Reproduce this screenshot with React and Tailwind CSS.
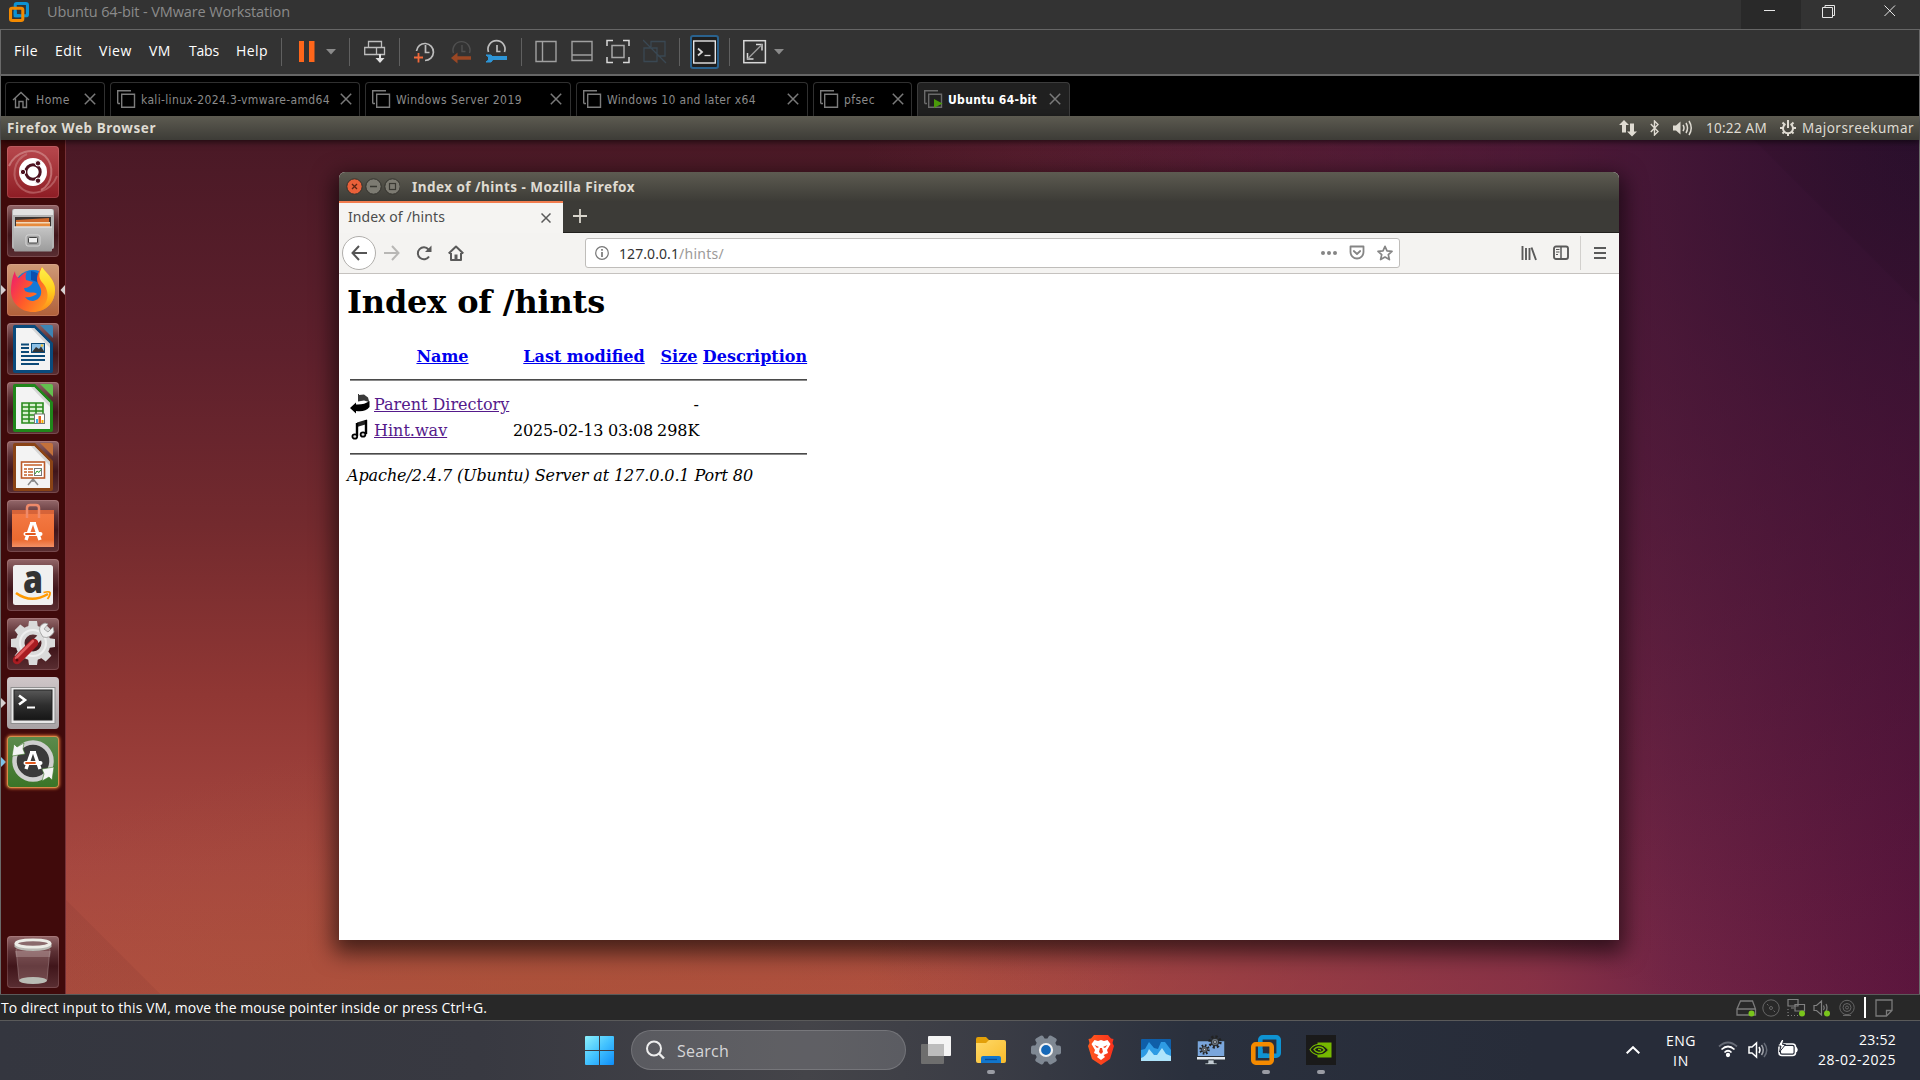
import { useLayoutEffect, useRef, useState } from "react";

/* Text set to an exact run length by spreading its letters. */
function Fit({ w, className = "", children }) {
  const ref = useRef(null);
  const [ls, setLs] = useState(0);
  useLayoutEffect(() => {
    const el = ref.current;
    el.style.letterSpacing = "0px";
    const natural = el.getBoundingClientRect().width;
    const v = (w - natural) / el.textContent.length;
    el.style.letterSpacing = v + "px";
    setLs(v);
  }, [w]);
  return (
    <span ref={ref} className={"inline-block shrink-0 whitespace-pre " + className} style={{ letterSpacing: ls + "px" }}>
      {children}
    </span>
  );
}

function Svg({ w, h, className = "", children, ...rest }) {
  return (
    <svg width={w} height={h} viewBox={`0 0 ${w} ${h}`} fill="none" className={"block shrink-0 " + className} {...rest}>
      {children}
    </svg>
  );
}

function VmwareLogo({ size, className = "" }) {
  return (
    <svg width={size} height={size} viewBox="0 0 30 30" fill="none" className={"block shrink-0 " + className}>
      <rect x="9.3" y="2.3" width="18.4" height="18.4" rx="2.5" stroke="#0e93d3" strokeWidth="4.6" />
      <rect x="2.3" y="9.3" width="18.4" height="18.4" rx="2.5" stroke="#f48a00" strokeWidth="4.6" />
      <path d="M9.3 14V20.7H16" stroke="#0e93d3" strokeWidth="4.6" />
    </svg>
  );
}

function TitleBar() {
  return (
    <div className="flex h-[29px] shrink-0 bg-[#333333]">
      <VmwareLogo size={20} className="ml-[9px] mt-[2px]" />
      <Fit w={243} className="ml-[18px] mt-[1px] font-['Open_Sans',sans-serif] text-[14.5px] leading-[22px] text-[#8b8b8b]">
        Ubuntu 64-bit - VMware Workstation
      </Fit>
      <div className="ml-auto flex">
        <div className="h-[29px] w-[60px] bg-[#292929]">
          <Svg w={60} h={29}><path d="M23 10.5H34" stroke="#e6e6e6" /></Svg>
        </div>
        <Svg w={60} h={29}>
          <path d="M21.5 7.5H31.5V17.500H21.500ZM24 7V5.500H33.500V15.500H32" stroke="#e6e6e6" />
        </Svg>
        <Svg w={59} h={29}><path d="M23.500 5.500L34 16M34 5.500L23.500 16" stroke="#e6e6e6" /></Svg>
      </div>
    </div>
  );
}

const Sep = ({ className }) => <div className={"h-[28px] w-px shrink-0 bg-[#606060] " + className} />;

function ToolBar() {
  const menu = "font-['Open_Sans',sans-serif] text-[14px] leading-[20px] text-white -mt-[2px]";
  return (
    <div className="flex h-[44px] shrink-0 items-center border-x border-[#6a6a6a] bg-[#333333]">
      <Fit w={24} className={"ml-[13px] " + menu}>File</Fit>
      <Fit w={27} className={"ml-[17px] " + menu}>Edit</Fit>
      <Fit w={33} className={"ml-[17px] " + menu}>View</Fit>
      <Fit w={22} className={"ml-[17px] " + menu}>VM</Fit>
      <Fit w={30} className={"ml-[18px] " + menu}>Tabs</Fit>
      <Fit w={32} className={"ml-[17px] " + menu}>Help</Fit>
      <Sep className="ml-[13px]" />
      <Svg w={38} h={44} className="ml-[17px]">
        <path d="M0 11H5V32H0ZM10 11H15.500V32H10Z" fill="#ff661a" />
        <path d="M27 19H37L32 24.500Z" fill="#8a8a8a" />
      </Svg>
      <Sep className="ml-[12px]" />
      <Svg w={22} h={44} className="ml-[14px]" stroke="#bdbdbd" strokeWidth="1.300">
        <path d="M4.500 11.500H17.500V17.500H4.500ZM.700 17.500H12.500V24.500H.700ZM12.500 17.500H20.500V24.500H12.500" />
        <path d="M16 24V30" stroke="#e0e0e0" strokeWidth="2" />
        <path d="M11.500 28H20.500L16 33Z" fill="#e0e0e0" stroke="none" />
      </Svg>
      <Sep className="ml-[13px]" />
      <Svg w={22} h={44} className="ml-[14px]">
        <path d="M2.500 21A8.500 8.500 0 1 1 11 30.500M11.500 15V22.500H15.500" stroke="#bdbdbd" strokeWidth="1.700" />
        <path d="M0 27.500H9M4.500 23V32.500" stroke="#f2693a" strokeWidth="1.800" />
      </Svg>
      <Svg w={21} h={44} className="ml-[15px]">
        <path d="M2.500 23A8.500 8.500 0 1 1 18.500 23M11 15V21.500H14.500" stroke="#505050" strokeWidth="1.400" />
        <path d="M5 28H20" stroke="#9a4724" strokeWidth="3.500" />
        <path d="M0 28L6.500 22.500V33.500Z" fill="#9a4724" />
      </Svg>
      <Svg w={22} h={44} className="ml-[14px]">
        <path d="M2.500 22A8.500 8.500 0 1 1 18.500 22M11 15V21.500H14.500" stroke="#bdbdbd" strokeWidth="1.700" />
        <path d="M5 28H21" stroke="#2e96d8" strokeWidth="4" />
        <path d="M0 25H5L7 27.500V29.500L5 32H0L2.500 30V27Z" fill="#2e96d8" stroke="#2e96d8" />
      </Svg>
      <Sep className="ml-[13px]" />
      <Svg w={22} h={44} className="ml-[13px]" stroke="#a0a0a0" strokeWidth="1.400">
        <path d="M1 11.500H21V31.500H1ZM7.500 11.500V31.500" />
      </Svg>
      <Svg w={22} h={44} className="ml-[14px]" stroke="#a0a0a0" strokeWidth="1.400">
        <path d="M1 11.500H21V30.500H1ZM1 25H21" />
      </Svg>
      <Svg w={24} h={44} className="ml-[13px]" stroke="#d8d8d8" strokeWidth="1.500">
        <path d="M1 16V10.500H7M17 10.500H23V16M23 27V32.500H17M7 32.500H1V27" />
        <rect x="6" y="15.500" width="12" height="12" stroke="#a8a8a8" />
      </Svg>
      <Svg w={24} h={44} className="ml-[13px]" stroke="#3a4853" strokeWidth="1.300">
        <path d="M8 17V11.500H22V26H15M1 18H14V31.500H1ZM0 10L23 33" />
      </Svg>
      <Sep className="ml-[12px]" />
      <div className="ml-[10px] flex h-[34px] w-[29px] shrink-0 items-center justify-center rounded-[3px] border-2 border-[#2a628e] bg-[#1f1f1f]">
        <Svg w={25} h={30}>
          <rect x="1.700" y="4" width="21.600" height="22" stroke="#e6e6e6" strokeWidth="1.400" />
          <path d="M6 11.500L10 15L6 18.500" stroke="#d8d8d8" strokeWidth="1.800" />
          <path d="M12.500 18.500H18.500" stroke="#d8d8d8" strokeWidth="1.300" />
        </Svg>
      </div>
      <Sep className="ml-[10px]" />
      <Svg w={42} h={44} className="ml-[13px]">
        <rect x=".800" y="10.700" width="21.600" height="22" stroke="#d8d8d8" strokeWidth="1.500" />
        <path d="M13 14.500H19V20.500M4.500 23V29H10.500" stroke="#d8d8d8" strokeWidth="1.500" />
        <path d="M19 14.500L4.500 29" stroke="#9a9a9a" strokeWidth="1.500" />
        <path d="M31 19H41L36 24.500Z" fill="#8a8a8a" />
      </Svg>
    </div>
  );
}

function VmIcon({ running }) {
  return (
    <Svg w={19} h={20} className="-mt-px" stroke={running ? "#6a6a6a" : "#7c7c7c"} strokeWidth="1.400">
      <path d="M.700 14.500V1.700H14M.700 14.500H3M4.700 5.200H17.500V18.300H4.700Z" />
      {running && <path d="M10 10L18.500 14.500L10 19Z" fill="#4a9a0a" stroke="none" />}
    </Svg>
  );
}

function Tab({ label, textW, active, home, box, closeGap }) {
  return (
    <div className={"flex h-[34px] shrink-0 items-center rounded-t-[4px] border border-b-0 pl-[6px] " + box + (active ? " border-[#3c3c3c] bg-[#202020]" : " border-[#303030] bg-black")}>
      {home ? (
        <Svg w={18} h={18} stroke="#7c7c7c" strokeWidth="1.400">
          <path d="M1 9L9 1.500L17 9M3.500 7.500V16.500H7V10.500H11V16.500H14.500V7.500" />
        </Svg>
      ) : (
        <VmIcon running={active} />
      )}
      <Fit w={textW} className={"mt-px font-['DejaVu_Sans_Condensed','DejaVu_Sans',sans-serif] text-[12px] leading-[16px] " + (home ? "ml-[6px] " : "ml-[5px] ") + (active ? "font-bold text-white" : "text-[#8a8a8a]")}>
        {label}
      </Fit>
      <Svg w={12} h={12} className={"-mt-px " + closeGap} stroke="#7a7a7a" strokeWidth="1.500"><path d="M.800 .800L11.200 11.200M11.200 .800L.800 11.200" /></Svg>
    </div>
  );
}

function TabStrip() {
  return (
    <div className="flex h-[40px] shrink-0 items-end gap-[5px] border-x border-[#6a6a6a] bg-black pl-[4px]">
      <Tab home label="Home" textW={34} box="w-[100px]" closeGap="ml-[14px]" />
      <Tab label="kali-linux-2024.3-vmware-amd64" textW={189} box="w-[250px]" closeGap="ml-[10px]" />
      <Tab label="Windows Server 2019" textW={126} box="w-[206px]" closeGap="ml-[28px]" />
      <Tab label="Windows 10 and later x64" textW={149} box="w-[232px]" closeGap="ml-[31px]" />
      <Tab label="pfsec" textW={31} box="w-[99px]" closeGap="ml-[17px]" />
      <Tab active label="Ubuntu 64-bit" textW={89} box="w-[153px]" closeGap="ml-[12px]" />
    </div>
  );
}

function TopPanel() {
  return (
    <div className="relative z-10 flex h-[24px] shrink-0 items-center bg-linear-to-b from-[#5d5b51] to-[#3d3c37] font-['Noto_Sans',sans-serif] text-[13.500px] leading-[20px] text-[#dfdbd2] shadow-[0_2px_6px_rgba(0,0,0,0.6)]">
      <Fit w={149} className="ml-[6px] font-bold">Firefox Web Browser</Fit>
      <div className="ml-auto flex items-center">
        <Svg w={18} h={18}>
          <path d="M5 1L10 6H7V13.500H3V6H0ZM13 17.500L18 12.500H15V4.500H11V12.500H8Z" fill="#dfdbd2" />
        </Svg>
        <Svg w={9} h={16} className="ml-[13px]" stroke="#dfdbd2" strokeWidth="1.400"><path d="M.800 4L8 11.500L4.500 15V1L8 4.500L.800 12" /></Svg>
        <Svg w={20} h={16} className="ml-[14px]">
          <path d="M0 5.500H3L7.500 1.500V14.500L3 10.500H0Z" fill="#dfdbd2" />
          <path d="M10 5Q12 8 10 11M13 3Q16 8 13 13M16 1Q20.500 8 16 15" stroke="#dfdbd2" strokeWidth="1.500" />
        </Svg>
        <Fit w={61} className="ml-[13px]">10:22 AM</Fit>
        <Svg w={16} h={16} className="ml-[13px]" stroke="#dfdbd2">
          <path d="M5.500 4A5 5 0 1 0 10.500 4" strokeWidth="2" />
          <path d="M8 0V8" strokeWidth="2" />
          <path d="M8 13V16M0 8H3M13 8H16M2.500 2.500L4.500 4.500M13.500 2.500L11.500 4.500M2.500 13.500L4.500 11.500M13.500 13.500L11.500 11.500" strokeWidth="2" />
        </Svg>
        <Fit w={112} className="ml-[6px] mr-[5px]">Majorsreekumar</Fit>
      </div>
    </div>
  );
}

/* ---- launcher tiles, each drawn on a 52 unit square ---- */

const Ubuntu = () => (
  <>
    <path d="M2 20C8 6 26 0 38 10C48 20 46 38 34 44" stroke="#d08a8a" strokeWidth="2" opacity=".7" />
    <path d="M50 30C44 46 24 52 13 41C4 32 6 14 20 8" stroke="#d08a8a" strokeWidth="2" opacity=".5" />
    <circle cx="26" cy="26" r="14" fill="#fff" />
    <circle cx="26" cy="26" r="7.200" stroke="#4e1220" strokeWidth="3" />
    <g fill="#4e1220" stroke="#fff" strokeWidth="1"><circle cx="16" cy="26" r="2.700" /><circle cx="31" cy="17.300" r="2.700" /><circle cx="31" cy="34.700" r="2.700" /></g>
  </>
);
const Files = () => (
  <>
    <rect x="5" y="4" width="42" height="40" rx="2" fill="#b4b4b4" />
    <path d="M6 6Q6 4 8 4H44Q46 4 46 6V10H6Z" fill="#e2e2e2" />
    <rect x="8" y="12" width="36" height="11" fill="#3a3432" />
    <path d="M9 15L42 13V22H9Z" fill="#d06a2c" /><path d="M9 17H43V22H9Z" fill="#f2d7b8" /><path d="M9 18.500H43V22H9Z" fill="#e88b3c" />
    <rect x="7" y="21.500" width="38" height="25" rx="1" fill="url(#gray)" />
    <path d="M7 22H45" stroke="#ededed" />
    <rect x="19" y="30" width="14" height="11" rx="2" fill="#a2a2a2" stroke="#d8d8d8" />
    <rect x="21.500" y="32.500" width="9" height="5.500" rx="1" fill="#eee" stroke="#444" />
  </>
);
const Firefox = () => (
  <>
    <circle cx="26" cy="25" r="19" fill="#1479d8" />
    <path d="M24 7C33 8 37 16 36 25C34 19 29 17 24 16Z" fill="#0b4fb0" />
    <path d="M8 7C5 13 4 21 4 27C4 39 14 48 26 48C39 48 48 38 48 26C48 15 41 12 35 3C29 10 29 17 32 21C37 29 33 36 26 37C21 37 19 34 18 33C23 34 26 32 30 30C28 27 22 30 18 27L17 24C21 24 24 22 26 18L19 16C18 12 19 9 20 8C16 9 14 12 12 14C9 13 8 10 8 7Z" fill="url(#fire)" />
    <path d="M35 3C42 12 48 16 48 26C48 38 40 46 31 47C39 41 43 34 39 24C37 18 28 16 35 3Z" fill="url(#flame)" />
  </>
);
function Doc({ edge, fold, children }) {
  return (
    <>
      <path d="M8 2H28L46 20V48Q46 50 44 50H8Q6 50 6 48V4Q6 2 8 2Z" fill={edge} />
      <path d="M9 5H27L43 21V47H9Z" fill="#f3f3f3" /><path d="M27 5L43 21V25L24 5Z" fill="#d5d5d5" />
      <path d="M33 2H44Q46 2 46 4V15Z" fill={fold} />
      {children}
    </>
  );
}
const Writer = () => (
  <Doc edge="#0a4a7c" fold="#3d84b4">
    <path d="M14 21.500H22M14 25H22M14 29H22M14 33H38M14 37H38M14 41H32" stroke="#0c4a78" strokeWidth="1.800" />
    <rect x="24.500" y="20.500" width="13" height="9" fill="#8cc0e6" stroke="#0c4a78" /><path d="M25 29L29 24L32 26L34 23.500L37.500 29Z" fill="#333" /><circle cx="35" cy="22.500" r="1.300" fill="#f3c33a" />
  </Doc>
);
const Calc = () => (
  <Doc edge="#20861a" fold="#63c04e">
    <path d="M15 21H36V41H15ZM15 25H36M15 29H36M15 33H36M15 37H36M22 21V41M29 21V41" stroke="#2a8a1e" strokeWidth="1.600" fill="#d9f0d0" />
    <rect x="27.500" y="32" width="10" height="9.500" fill="#fff" stroke="#777" /><path d="M29 37H31V41H29Z" fill="#3daee9" /><path d="M31.500 34H34V41H31.500Z" fill="#e8641e" /><path d="M34.500 38H36.500V41H34.500Z" fill="#f2b200" />
  </Doc>
);
const Impress = () => (
  <Doc edge="#8a4315" fold="#c4713b">
    <path d="M26 37V41M21 44L26 38L31 44" stroke="#888" strokeWidth="1.500" />
    <rect x="14.500" y="21" width="23" height="16" fill="#fff" stroke="#bb5a2a" strokeWidth="1.600" />
    <path d="M17 24H35M17 28H20M17 31H20M17 34H20M21 28H26M21 31H26M21 34H26" stroke="#c4602a" strokeWidth="1.600" />
    <rect x="27.500" y="27.500" width="7" height="7" stroke="#777" /><path d="M28 33L30 30L32 31.500L34 28.500" stroke="#2a9a2a" />
  </Doc>
);
const LetterA = ({ y = 0 }) => (
  <g transform={`translate(0 ${y})`} strokeLinecap="round">
    <path d="M24.500 24L19 40M27.500 24L33 40" stroke="#fff" strokeWidth="3.400" strokeLinecap="butt" />
    <path d="M23 23.500H29" stroke="#fff" strokeWidth="3" strokeLinecap="butt" />
    <path d="M18.500 34H33.500" stroke="#fff" strokeWidth="4" /><path d="M19 34H28" stroke="#e2591d" strokeWidth="1.800" />
  </g>
);
const Software = () => (
  <>
    <path d="M5 10H47V47H5Z" fill="url(#orange)" /><path d="M5 10H47V14H5Z" fill="#c95a35" opacity=".7" />
    <path d="M20 18V8Q20 5 23 5H29Q32 5 32 8V18" stroke="#ef8a6a" strokeWidth="2.500" />
    <LetterA />
  </>
);
const Amazon = () => (
  <>
    <rect x="6" y="6" width="40" height="40" rx="2.500" fill="#f0f0f0" />
    <text x="26" y="34" textAnchor="middle" fontFamily="Open Sans, sans-serif" fontWeight="800" fontSize="38" textLength="20" lengthAdjust="spacingAndGlyphs" fill="#333">a</text>
    <path d="M9 34Q24 45 41 35" stroke="#ff9900" strokeWidth="2.600" /><path d="M36.500 33.500Q42 32 43 33.500Q43.500 36 40.500 40" stroke="#ff9900" strokeWidth="1.800" />
  </>
);
const Tools = () => (
  <>
    <g transform="translate(26 25)">
      <circle r="13" stroke="#dadada" strokeWidth="9" />
      {[0, 45, 90, 135, 180, 225, 270, 315].map((a) => (
        <path key={a} d="M-5 -15L-4 -22H4L5 -15Z" fill="#dadada" transform={`rotate(${a})`} />
      ))}
      <circle r="13" stroke="#eeeeee" strokeWidth="2" />
    </g>
    <path d="M28 24L38 14" stroke="#dddddd" strokeWidth="6" />
    <path d="M38 5Q31 7 33 14L36 19Q43 21 47 14L46 9L41 14L37 11L41 6Z" fill="#eeeeee" stroke="#999" strokeWidth=".8" />
    <path d="M10 42L27 25" stroke="#a81c22" strokeWidth="8.500" strokeLinecap="round" /><path d="M9 40L26 23" stroke="#df5a5c" strokeWidth="2.500" strokeLinecap="round" />
    <circle cx="10" cy="42" r="1.500" fill="#5a0a0e" />
  </>
);
const Terminal = () => (
  <>
    <rect x="4" y="10.500" width="44" height="36" fill="#e8e8e8" stroke="#8f8f8f" />
    <rect x="7" y="13" width="38" height="30" fill="url(#term)" stroke="#222" />
    <path d="M12 18.500L18 23L12 27.500" stroke="#fff" strokeWidth="2.600" /><path d="M20 30.500H28" stroke="#fff" strokeWidth="2" />
  </>
);
const Updater = () => (
  <>
    <circle cx="26" cy="25" r="18.500" fill="#3a3a3a" stroke="#cfcfcf" strokeWidth="4.500" />
    <path d="M5 20L7 8L10 11L17 7L16 13L18 18Z" fill="#f4f4f4" stroke="#3f7a2c" strokeWidth=".6" /><path d="M47 31L45 44L42 41L35 45L37 38L35 33Z" fill="#f4f4f4" stroke="#3f7a2c" strokeWidth=".6" />
    <LetterA y={-7} />
  </>
);
const Trash = () => (
  <>
    <path d="M9 12L12 44Q26 50 40 44L43 12Z" fill="#c9a5a5" opacity=".28" />
    <path d="M9 13L12 44M43 13L40 44" stroke="#c9b5b5" opacity=".35" />
    <path d="M8 15H44L43 21H9Z" fill="#d8c5c5" opacity=".3" />
    <ellipse cx="26" cy="44.500" rx="14" ry="3.500" fill="#b9bcb5" />
    <path d="M7.500 7V11Q12 15 26 15Q40 15 44.500 11V7Z" fill="#b8b8b2" />
    <ellipse cx="26" cy="7.500" rx="17" ry="3.600" fill="#8a6a6c" stroke="#ecece6" strokeWidth="2.800" />
  </>
);

const RIM = " shadow-[inset_0_0_0_1px_rgba(255,200,200,0.18)]";
const GLASS = "bg-[linear-gradient(180deg,#94686a_0%,#5c3034_30%,#40151a_58%,#5a2e32_100%)]" + RIM;
const LAUNCHERS = [
  { Icon: Ubuntu, bg: "bg-linear-to-b from-[#b8484e] to-[#8e1c24]" + RIM },
  { Icon: Files, bg: GLASS },
  { Icon: Firefox, bg: "bg-linear-to-b from-[#cf9a77] to-[#b0603a]" + RIM, arrow: "#d6cfd0", focused: true },
  { Icon: Writer, bg: GLASS },
  { Icon: Calc, bg: GLASS },
  { Icon: Impress, bg: GLASS },
  { Icon: Software, bg: GLASS },
  { Icon: Amazon, bg: GLASS },
  { Icon: Tools, bg: GLASS },
  { Icon: Terminal, bg: "bg-linear-to-b from-[#cfc6c8] to-[#a8a3a5]", arrow: "#d6cfd0" },
  { Icon: Updater, bg: "bg-linear-to-b from-[#5c8a4c] to-[#3a7426] shadow-[0_0_3px_1px_#d06a34,inset_0_0_0_1px_#d98a4a]", arrow: "#7cc4ea" },
];

function Tile({ Icon, bg, arrow, focused }) {
  return (
    <div className="flex h-[52px] w-[64px] shrink-0 items-center">
      <Svg w={6} h={12}>{arrow && <path d="M0 1L5 6L0 11Z" fill={arrow} />}</Svg>
      <div className={"h-[52px] w-[52px] shrink-0 rounded-[4px] " + bg}>
        <Svg w={52} h={52}><Icon /></Svg>
      </div>
      <Svg w={6} h={12}>{focused && <path d="M6 1L1.500 6L6 11Z" fill={arrow} />}</Svg>
    </div>
  );
}

function Launcher() {
  return (
    <div className="flex w-[65px] shrink-0 flex-col gap-[7px] border-r border-[#8c4048]/70 bg-[#400a0b] pb-[6px] pt-[6px]">
      <svg width="0" height="0" className="absolute">
        <defs>
          <linearGradient id="gray" x2="0" y2="1"><stop stopColor="#c6c6c6" /><stop offset="1" stopColor="#9b9b9b" /></linearGradient>
          <linearGradient id="fire" x1="0" y1=".2" x2="1" y2=".8"><stop stopColor="#f01e6a" /><stop offset=".45" stopColor="#ff5a2a" /><stop offset="1" stopColor="#ffa81a" /></linearGradient>
          <linearGradient id="flame" x2="0" y2="1"><stop stopColor="#fff04a" /><stop offset=".5" stopColor="#ffd21e" /><stop offset="1" stopColor="#ff8a1a" /></linearGradient>
          <linearGradient id="orange" x2="0" y2="1"><stop stopColor="#f47a45" /><stop offset=".8" stopColor="#ec6a30" /><stop offset="1" stopColor="#f29066" /></linearGradient>
          <linearGradient id="term" x2="0" y2="1"><stop stopColor="#585858" /><stop offset=".5" stopColor="#2e2e2e" /><stop offset="1" stopColor="#161616" /></linearGradient>
        </defs>
      </svg>
      {LAUNCHERS.map((l, i) => <Tile key={i} {...l} />)}
      <div className="mt-auto"><Tile Icon={Trash} bg={GLASS} /></div>
    </div>
  );
}

function BrowserWindow() {
  const head = "flex translate-x-px justify-center font-bold text-[#0000ee] underline";
  return (
    <div className="ml-[273px] mt-[32px] flex h-[768px] w-[1280px] shrink-0 flex-col overflow-hidden rounded-t-[6px] bg-white shadow-[0_8px_22px_5px_rgba(0,0,0,0.6)]">
      <div className="flex h-[29px] shrink-0 items-center bg-linear-to-b from-[#5d5b51] to-[#3d3c37] pl-[7px]">
        <Svg w={54} h={17}>
          <circle cx="8.500" cy="8.500" r="7.700" fill="#ea6039" stroke="#33322d" />
          <path d="M6 6L11 11M11 6L6 11" stroke="#5e2412" strokeWidth="1.300" />
          <circle cx="27.500" cy="8.500" r="7.700" fill="#7d7b72" stroke="#33322d" /><path d="M24 8.500H31" stroke="#3a3933" strokeWidth="1.300" />
          <circle cx="46.500" cy="8.500" r="7.700" fill="#7d7b72" stroke="#33322d" /><rect x="43.500" y="5.500" width="6" height="6" stroke="#3a3933" strokeWidth="1.200" />
        </Svg>
        <Fit w={223} className="ml-[12px] font-['Noto_Sans',sans-serif] text-[13.500px] font-bold leading-[20px] text-[#dfdbd2]">Index of /hints - Mozilla Firefox</Fit>
      </div>
      <div className="flex h-[32px] shrink-0 bg-[#3c3b37]">
        <div className="flex w-[224px] items-center border-t-2 border-[#f27c4e] bg-[#f5f4f2] pl-[9px]">
          <Fit w={97} className="-mt-[2px] font-['Noto_Sans',sans-serif] text-[14px] leading-[20px] text-[#4c4c4c]">Index of /hints</Fit>
          <Svg w={10} h={10} className="-mt-px ml-[96px]" stroke="#5a5a5a" strokeWidth="1.500"><path d="M.500 .500L9.500 9.500M9.500 .500L.500 9.500" /></Svg>
        </div>
        <div className="flex flex-1 items-center border-b border-[#22211e] pl-[10px]">
          <Svg w={14} h={14} className="-mt-px" stroke="#d8d5cc" strokeWidth="1.800"><path d="M7 0V14M0 7H14" /></Svg>
        </div>
      </div>
      <div className="flex h-[41px] shrink-0 items-center border-b border-[#c5c2bf] bg-[#f4f3f1]">
        <div className="ml-[3px] flex h-[34px] w-[34px] items-center justify-center rounded-full border border-[#b0aeab] bg-white">
          <Svg w={16} h={16} stroke="#555" strokeWidth="2"><path d="M16 8H1.500M8 1L1.500 8L8 15" /></Svg>
        </div>
        <Svg w={16} h={16} className="ml-[8px]" stroke="#b8b7b5" strokeWidth="2"><path d="M0 8H14.500M8 1L14.500 8L8 15" /></Svg>
        <Svg w={16} h={16} className="ml-[16px]"><path d="M13 11.500A6 6 0 1 1 12.500 4.500" stroke="#5a5a5a" strokeWidth="2" /><path d="M15.500 .500V7H9Z" fill="#5a5a5a" /></Svg>
        <Svg w={16} h={16} className="ml-[16px]">
          <path d="M.700 8.500L8 1.500L15.300 8.500M3 8V15H13V8" stroke="#5a5a5a" strokeWidth="2" strokeLinejoin="round" /><path d="M6.500 15V9.500H9.500V15Z" fill="#5a5a5a" />
        </Svg>
        <div className="ml-[121px] flex h-[30px] w-[815px] items-center rounded-[3px] border border-[#bfbdba] bg-white pl-[9px] font-['Noto_Sans',sans-serif] text-[14px] leading-[20px]">
          <Svg w={14} h={14} stroke="#777"><circle cx="7" cy="7" r="6.300" strokeWidth="1.200" /><path d="M7 6V11M7 3V4.800" strokeWidth="1.700" /></Svg>
          <Fit w={60} className="ml-[10px] mt-px text-[#333]">127.0.0.1</Fit>
          <Fit w={45} className="mt-px text-[#9c9a98]">/hints/</Fit>
          <Svg w={16} h={16} className="ml-[597px]"><circle cx="2" cy="8" r="2" fill="#858585" /><circle cx="8" cy="8" r="2" fill="#858585" /><circle cx="14" cy="8" r="2" fill="#858585" /></Svg>
          <Svg w={16} h={16} className="ml-[12px]" stroke="#858585" strokeWidth="1.800" strokeLinejoin="round" strokeLinecap="round"><path d="M1.500 1.500H14.500V7A6.500 6.500 0 0 1 1.500 7ZM4.800 6L8 9L11.200 6" /></Svg>
          <Svg w={16} h={16} className="ml-[12px]" stroke="#858585" strokeWidth="1.700" strokeLinejoin="round"><path d="M8 1.300L10 5.800L15 6.300L11.300 9.600L12.400 14.600L8 12L3.600 14.600L4.700 9.600L1 6.300L6 5.800Z" /></Svg>
        </div>
        <Svg w={16} h={16} className="ml-[121px]" stroke="#5a5a5a" strokeWidth="1.900"><path d="M1.500 1V15M5 3V15M8.500 3V15M10.500 2.500L15 15" /></Svg>
        <Svg w={16} h={16} className="ml-[16px]" stroke="#5a5a5a" strokeWidth="1.900"><rect x="1" y="1.500" width="14" height="12.500" rx="2" /><path d="M8 2V14" strokeWidth="1.500" /><path d="M3 4.500H6.500M3 7H6.500M3 9.500H5" strokeWidth="1" /></Svg>
        <div className="ml-[11px] h-[34px] w-px bg-[#d2d0cd]" />
        <Svg w={12} h={12} className="ml-[13px]" stroke="#5a5a5a" strokeWidth="2"><path d="M0 1H12M0 6H12M0 11H12" /></Svg>
      </div>
      <div className="flex flex-1 flex-col bg-white pl-[8px] pt-[10px] font-['DejaVu_Serif',serif] text-[16px] leading-[19px] text-black">
        <h1 className="h-[37px] text-[32px] font-bold leading-[37px]"><Fit w={258}>Index of /hints</Fit></h1>
        <div className="ml-[3px] mt-[26px] grid w-[457px] grid-cols-[20px_135px_140px_42px_104px] gap-x-[4px] whitespace-nowrap">
          <div className={"col-start-2 h-[19px] " + head}>Name</div>
          <div className={head}>Last modified</div>
          <div className={head}>Size</div>
          <div className="flex justify-center font-bold text-[#0000ee] underline">Description</div>
          <div className="col-span-5 mb-[14px] mt-[13px] h-[2px] border-t border-[#4a4a4a] bg-[#8a8a8a]" />
          <Svg w={20} h={22} className="-mt-[2px]">
            <path d="M8 1H9V2L14 1.500L18 4.500L19 8V9L14 7.500L8 8.500Z" fill="#3a3a3a" />
            <path d="M0 15L6 9.500V11.500Q14 12 19.500 8V14Q15 19.500 6 18V20.500Z" fill="#000" />
          </Svg>
          <div className="h-[26px] text-[#551a8b] underline">Parent Directory</div>
          <div className="col-start-4 text-right">-</div>
          <Svg w={20} h={22} className="col-start-1 -mt-[2px]">
            <path d="M7 3.500L17 .500V5L7 8Z" fill="#222" /><path d="M7 4V17M16 1V15" stroke="#000" strokeWidth="2.400" />
            <ellipse cx="4.800" cy="17.500" rx="2.400" ry="2.200" fill="#ddd" stroke="#000" strokeWidth="1.800" /><ellipse cx="13" cy="15.500" rx="2.400" ry="2.200" fill="#ddd" stroke="#000" strokeWidth="1.800" />
          </Svg>
          <div className="text-[#551a8b] underline">Hint.wav</div>
          <div><Fit w={140}>2025-02-13 03:08</Fit></div>
          <div className="text-right">298K</div>
          <div className="col-span-5 mt-[12px] h-[2px] border-t border-[#4a4a4a] bg-[#8a8a8a]" />
        </div>
        <div className="mt-[11px] italic"><Fit w={406}>Apache/2.4.7 (Ubuntu) Server at 127.0.0.1 Port 80</Fit></div>
      </div>
    </div>
  );
}

function StatusBar() {
  const dot = (x, y) => <circle cx={x} cy={y} r="3" fill="#7ac51c" stroke="none" />;
  return (
    <div className="flex h-[27px] shrink-0 items-center border-y border-[#5a5a5a] bg-[#282828]">
      <Fit w={486} className="ml-[1px] mt-px font-['Open_Sans',sans-serif] text-[14px] leading-[20px] text-white">To direct input to this VM, move the mouse pointer inside or press Ctrl+G.</Fit>
      <div className="ml-auto mr-[27px] flex items-center">
        <Svg w={21} h={20} stroke="#7a7a7a" strokeWidth="1.300"><path d="M4.500 3H16.500L19.500 11V17H1V11ZM1.500 11H19" />{dot(15.500, 15.500)}</Svg>
        <Svg w={18} h={20} className="ml-[5px]" stroke="#666"><circle cx="9" cy="10" r="8.200" /><circle cx="9" cy="10" r="1.500" /><path d="M5 6L6.500 7.500M11.500 12.500L13 14" /></Svg>
        <Svg w={19} h={20} className="ml-[7px]" stroke="#808080" strokeWidth="1.200"><path d="M1 1.500H11V8H1ZM8 6.500H17.500V13H8ZM4 10H7" /><path d="M1 11V18M1 17.500H12" strokeDasharray="1 2" />{dot(15, 15.500)}</Svg>
        <Svg w={18} h={20} className="ml-[7px]" stroke="#808080" strokeWidth="1.200"><path d="M1 7.500H3.500L8.500 3V17L3.500 12.500H1ZM10.500 7.500Q12 10 10.500 12M13 6Q15 10 13 13" />{dot(14, 15.500)}</Svg>
        <Svg w={16} h={20} className="ml-[8px]" stroke="#666"><circle cx="8" cy="9.500" r="7.200" /><circle cx="8" cy="9.500" r="4" /><circle cx="8" cy="9.500" r="1.500" /><path d="M4 17.500H12" /></Svg>
        <div className="ml-[9px] h-[21px] w-[2px] bg-white" />
        <Svg w={18} h={18} className="ml-[9px]" stroke="#7a7a7a" strokeWidth="1.300"><path d="M1 1H17V11.500L11.500 17H1ZM11.500 17V11.500H17" /></Svg>
      </div>
    </div>
  );
}

function AppSlot({ running, children }) {
  return (
    <div className="flex w-[30px] shrink-0 flex-col items-center pt-[14px]">
      <div className="h-[30px] w-[30px]">{children}</div>
      <div className={"mt-[5px] h-[4px] w-[8px] rounded-full " + (running ? "bg-[#9a9ca4]" : "")} />
    </div>
  );
}

const Gear = ({ x, y, s }) => (
  <g transform={`translate(${x} ${y}) scale(${s})`} stroke="#222">
    <circle r="5" strokeWidth="4" strokeDasharray="2 1.900" /><circle r="4" fill="#66707c" /><circle r="1.500" fill="#d0d8e0" strokeWidth=".8" />
  </g>
);

function Taskbar() {
  const ui = "font-['Open_Sans',sans-serif] leading-[20px] text-white";
  return (
    <div className="flex h-[59px] shrink-0 bg-[linear-gradient(90deg,#34363f_0%,#383941_25%,#444449_42%,#3a3c45_52%,#2a303d_62%,#272c39_80%,#272c39_100%)]">
      <svg width="0" height="0" className="absolute">
        <defs>
          <linearGradient id="win" x2="1" y2="1"><stop stopColor="#8df0fb" /><stop offset=".5" stopColor="#42c2ff" /><stop offset="1" stopColor="#0f8df8" /></linearGradient>
          <linearGradient id="folder" x2="1" y2="1"><stop stopColor="#ffd968" /><stop offset="1" stopColor="#f8bb2b" /></linearGradient>
          <linearGradient id="brave" x2="1" y2="0"><stop stopColor="#ff5a1f" /><stop offset="1" stopColor="#f7301c" /></linearGradient>
        </defs>
      </svg>
      <Svg w={30} h={30} className="ml-[585px] mt-[15px]"><path d="M1 0H14V14H0V1Q0 0 1 0ZM15 0H28Q29 0 29 1V14H15ZM0 15H14V29H1Q0 29 0 28ZM15 15H29V28Q29 29 28 29H15Z" fill="url(#win)" /></Svg>
      <div className="ml-[16px] mt-[9px] flex h-[40px] w-[275px] shrink-0 items-center rounded-full border border-white/15 bg-white/15 pl-[14px]">
        <Svg w={20} h={20} stroke="#ededed" strokeWidth="2"><circle cx="8" cy="8.500" r="7" /><path d="M13 13.500L18 18.500" strokeWidth="2.400" /></Svg>
        <Fit w={52} className="ml-[11px] mt-px font-['Open_Sans',sans-serif] text-[16px] leading-[22px] text-[#d6d6d8]">Search</Fit>
      </div>
      <div className="ml-[15px] flex gap-[25px]">
        <AppSlot>
          <Svg w={30} h={30}><rect x="0" y="9" width="23" height="20" rx="1" fill="#6e6e6e" /><rect x="7" y="1" width="23" height="20" rx="1" fill="#f4f4f4" /><path d="M7 9H23V21H7Z" fill="#bcbcbc" /></Svg>
        </AppSlot>
        <AppSlot running>
          <Svg w={30} h={30}>
            <path d="M0 4Q0 2 2 2H10L13 5H28V12H0Z" fill="#e3a008" /><path d="M0 8H10L13 5H28Q30 5 30 7V26Q30 28 28 28H2Q0 28 0 26Z" fill="url(#folder)" />
            <path d="M5 28V23Q5 21 7 21H23Q25 21 25 23V28Z" fill="#1276cc" /><path d="M9 24.500H21" stroke="#0a4a92" strokeWidth="1.300" />
          </Svg>
        </AppSlot>
        <AppSlot>
          <Svg w={30} h={30}>
            <g transform="translate(15 15)">
              {[0, 60, 120].map((a) => <rect key={a} x="-4.500" y="-15" width="9" height="30" rx="2" fill="#7f8893" transform={`rotate(${a + 30})`} />)}
              <circle r="11.500" fill="#7f8893" /><circle r="6" fill="#1568b8" stroke="#f2f2f2" strokeWidth="2.200" />
            </g>
          </Svg>
        </AppSlot>
        <AppSlot>
          <Svg w={30} h={30}>
            <path d="M8 0H22L25 3.500L27.500 4L26.500 8L28 11L24 24L15 30L6 24L2 11L3.500 8L2.500 4L5 3.500Z" fill="url(#brave)" />
            <path d="M5.500 9L8.500 5L12 6L15 5L18 6L21.500 5L24.500 9L21 15L22 18L17.500 20L19 22L15 25L11 22L12.500 20L8 18L9 15Z" fill="#fff" />
            <path d="M8.500 10L13 12L11 13ZM21.500 10L17 12L19 13ZM13 17L15 19L17 17L16 13H14Z" fill="#f5401d" />
          </Svg>
        </AppSlot>
        <AppSlot>
          <Svg w={30} h={30}><rect y="4" width="30" height="22" rx="1" fill="#0f5ea8" /><path d="M0 15L4 14L8 7L13 13L17 14L20 7L24 7L30 15V26H0Z" fill="#2e9be4" /><path d="M0 23Q5 22 8 14L13 20L16 20L21 13L25 19L30 21V26H0Z" fill="#aee4fb" /></Svg>
        </AppSlot>
        <AppSlot>
          <Svg w={30} h={30}>
            <rect x="1" y="5.500" width="28" height="18" fill="#7aa6dc" stroke="#2a3038" strokeWidth="1.500" /><rect x=".5" y="21.500" width="29" height="3.500" fill="#e6ecf2" stroke="#2a3038" />
            <path d="M12 25H18V28H21V29.500H9V28H12Z" fill="#c4ccd4" stroke="#2a3038" strokeWidth=".7" /><Gear x={19} y={7} s={0.95} /><Gear x={8.500} y={14.500} s={0.75} />
          </Svg>
        </AppSlot>
        <AppSlot running><VmwareLogo size={30} /></AppSlot>
        <AppSlot running>
          <Svg w={30} h={30}>
            <rect width="30" height="30" fill="#1a1a1a" /><path d="M11.500 7.500H25.500V22.500H11.500Z" fill="#76b900" />
            <path d="M11.500 9.500Q18 9 22.500 15Q18 20.500 11.500 20Q6 18.500 4 14.500Q7 10 11.500 9.500Z" fill="#1a1a1a" stroke="#76b900" strokeWidth="1.100" />
            <path d="M12 12Q16.500 11.500 18.500 15Q16 18 12.500 17.500Q9 16.500 8 14.500Q9.500 12.500 12 12ZM12 14.500Q14 14 15 15.500" stroke="#76b900" strokeWidth="1.400" />
          </Svg>
        </AppSlot>
      </div>
      <div className="ml-auto mr-[24px] flex items-start">
        <Svg w={14} h={8} className="mt-[25px]" stroke="#fff" strokeWidth="2"><path d="M.700 7.300L7 1.200L13.300 7.300" /></Svg>
        <div className={"ml-[26px] mt-[10px] flex flex-col items-center text-[14px] " + ui}><Fit w={30}>ENG</Fit><Fit w={16}>IN</Fit></div>
        <Svg w={20} h={18} className="ml-[22px] mt-[19px]" stroke="#fff" strokeWidth="1.700">
          <path d="M1 6.500Q10-1.500 19 6.500" stroke="#666b76" /><path d="M3.500 9.500Q10 3.500 16.500 9.500M6.500 12.500Q10 9 13.500 12.500" /><circle cx="10" cy="15" r="1.300" fill="#fff" />
        </Svg>
        <Svg w={21} h={18} className="ml-[10px] mt-[20px]" stroke="#fff" strokeWidth="1.500">
          <path d="M1 6H4L8.500 2V16L4 12H1ZM11 6Q13 9 11 12" /><path d="M13.500 4Q17 9 13.500 14" stroke="#a0a3aa" /><path d="M16 2Q21.500 9 16 16" stroke="#666b76" />
        </Svg>
        <Svg w={20} h={18} className="ml-[9px] mt-[19px]">
          <rect x="1" y="4" width="16.500" height="11.500" rx="3" stroke="#fff" strokeWidth="1.600" /><rect x="3" y="6" width="12.500" height="7.500" rx="1" fill="#fff" /><path d="M18.500 7.500Q20 9.500 18.500 12Z" fill="#fff" stroke="#fff" />
          <path d="M4 -1L0 6H3L1.500 12L7.500 4.500H4.500L6 -1Z" fill="#fff" stroke="#272c39" strokeWidth="1" />
        </Svg>
        <div className={"ml-[20px] mt-[9px] flex flex-col items-end text-[14px] " + ui}><Fit w={37}>23:52</Fit><Fit w={78}>28-02-2025</Fit></div>
      </div>
    </div>
  );
}

export default function App() {
  return (
    <div className="flex h-[1080px] w-[1920px] flex-col overflow-hidden bg-black">
      <TitleBar />
      <div className="h-px shrink-0 bg-[#666666]" />
      <ToolBar />
      <div className="h-[2px] shrink-0 bg-[#666666]" />
      <TabStrip />
      <div className="flex h-[878px] shrink-0 flex-col border-x border-[#6a6a6a]">
        <TopPanel />
        <div className="flex min-h-0 flex-1 bg-[linear-gradient(45deg,rgba(40,0,20,0.06)_0px,rgba(40,0,20,0.06)_112px,transparent_113px),linear-gradient(45deg,transparent_94%,rgba(0,0,0,0.06)_94.1%),radial-gradient(ellipse_600px_260px_at_28%_100%,rgba(168,84,52,0.5),rgba(168,84,52,0)),radial-gradient(ellipse_900px_900px_at_100%_0%,rgba(42,16,46,0.95)_0%,rgba(48,16,46,0.6)_35%,rgba(70,22,50,0)_100%),linear-gradient(90deg,rgba(122,42,74,0)_45%,rgba(122,40,72,0.75)_80%,rgba(112,35,70,0.95)_87%,rgba(94,22,62,1)_100%),linear-gradient(180deg,#4a1926_0%,#5e202c_25%,#732a2e_45%,#903734_65%,#a64740_85%,#b04f41_100%)]">
          <Launcher />
          <BrowserWindow />
        </div>
      </div>
      <StatusBar />
      <Taskbar />
    </div>
  );
}
